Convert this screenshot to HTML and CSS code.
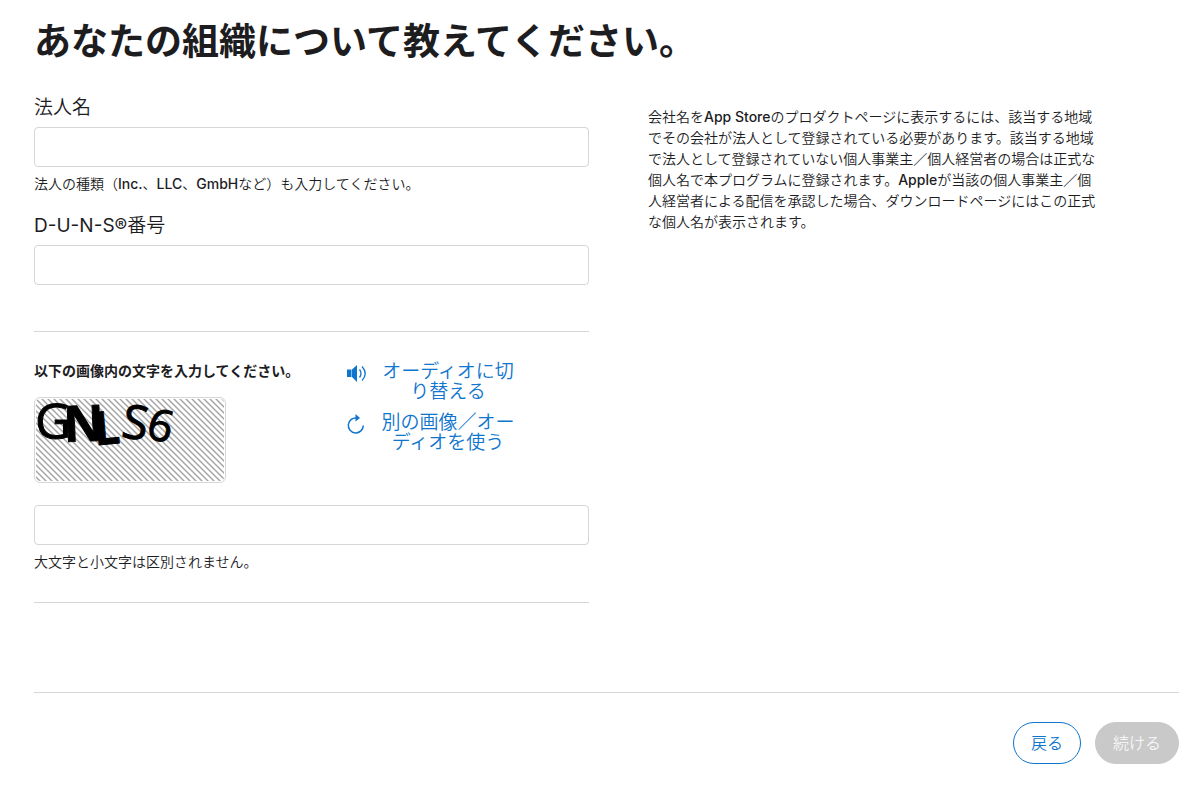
FILE: index.html
```html
<!DOCTYPE html>
<html lang="ja">
<head>
<meta charset="utf-8">
<meta name="viewport" content="width=device-width, initial-scale=1">
<title>あなたの組織について教えてください。</title>
<link rel="stylesheet" href="styles.css">
</head>
<body>
<main class="page">
  <h1 class="title">あなたの組織について教えてください。</h1>
  <form class="form">
    <div class="columns">
      <div class="fields">
        <div class="field">
          <label class="label" for="entity">法人名</label>
          <input class="input" id="entity" type="text" aria-describedby="entity-hint">
          <p class="hint" id="entity-hint">法人の種類（<span class="latin">Inc.</span>、<span class="latin">LLC</span>、<span class="latin">GmbH</span>など）も入力してください。</p>
        </div>
        <div class="field">
          <label class="label" for="duns"><span class="duns">D-U-N-S®</span>番号</label>
          <input class="input" id="duns" type="text">
        </div>
        <section class="captcha">
          <div class="challenge">
            <div class="prompt">
              <label class="prompt-label" for="answer">以下の画像内の文字を入力してください。</label>
              <svg class="picture" viewBox="0 0 188 82" role="img" aria-label="画像認証">
                <defs>
                  <pattern id="hatch" width="6" height="6" patternUnits="userSpaceOnUse">
                    <path d="M-1 -1L7 7M-1 5L1 7M5 -1L7 1" stroke="#a6a6a6" stroke-width="1.5"/>
                  </pattern>
                </defs>
                <rect width="188" height="82" fill="url(#hatch)"/>
                <g class="glyphs">
                  <text x="-1" y="40" font-size="50">G</text>
                  <text class="bold" x="28" y="43" font-size="50" transform="rotate(-2 30 43)">N</text>
                  <text class="heavy" x="59" y="46" font-size="46" transform="rotate(-5 62 46)">L</text>
                  <text x="84" y="38" font-size="47" transform="rotate(9 86 39)">S</text>
                  <text x="108" y="39" font-size="44" transform="rotate(14 110 42)">6</text>
                </g>
              </svg>
            </div>
            <div class="actions">
              <button class="action" type="button">
                <svg class="icon" viewBox="0 0 22 22" aria-hidden="true"><path d="M1 7.500h4.500V15H1zM6 7.500L11 3V20L6 15z" fill="currentColor"/><path d="M13.500 7.500q3 4 0 8M16 4.500q6.500 7 0 14" fill="none" stroke="currentColor" stroke-width="1.300"/></svg>
                <span class="action-text">オーディオに切り替える</span>
              </button>
              <button class="action" type="button">
                <svg class="icon" viewBox="0 0 22 22" aria-hidden="true"><path d="M11 5A7.500 7.500 0 1 0 17.300 12.500" fill="none" stroke="currentColor" stroke-width="1.500"/><path d="M9.500 1L14 5L9.500 8.500z" fill="currentColor"/></svg>
                <span class="action-text">別の画像／オーディオを使う</span>
              </button>
            </div>
          </div>
          <input class="input" id="answer" type="text" aria-describedby="answer-hint">
          <p class="hint" id="answer-hint">大文字と小文字は区別されません。</p>
        </section>
      </div>
      <p class="note">会社名を<span class="latin">App Store</span>のプロダクトページに表示するには、該当する地域<br>でその会社が法人として登録されている必要があります。該当する地域<br>で法人として登録されていない個人事業主／個人経営者の場合は正式な<br>個人名で本プログラムに登録されます。<span class="latin">Apple</span>が当該の個人事業主／個<br>人経営者による配信を承認した場合、ダウンロードページにはこの正式<br>な個人名が表示されます。</p>
    </div>
    <div class="footer">
      <button class="button back" type="button">戻る</button>
      <button class="button next" type="submit" disabled>続ける</button>
    </div>
  </form>
</main>
</body>
</html>
```
FILE: styles.css
```css
* {
  box-sizing: border-box;
}

body {
  margin: 0;
  background: #fff;
  color: #1d1d1f;
  font: 350 14px/21px Inter, "Noto Sans CJK JP", sans-serif;
}

button,
input {
  font: inherit;
}

.page {
  padding: 16px 21px 20px 34px;
}

.title {
  margin: 0;
  font-size: 37px;
  line-height: 52px;
  font-weight: 700;
}

.columns {
  display: grid;
  grid-template-columns: minmax(0, 555fr) minmax(0, 531fr);
  column-gap: 59px;
  margin-top: 27px;
}

.field {
  margin-bottom: 19px;
}

.label {
  display: block;
  margin-bottom: 6px;
  font-size: 19px;
  line-height: 26px;
}

.duns {
  font-weight: 400;
}

.input {
  display: block;
  width: 100%;
  height: 40px;
  padding: 0 12px;
  border: 1px solid #d6d6d6;
  border-radius: 4px;
  background: #fff;
}

.hint {
  margin: 6px 0 0;
}

.latin {
  font-weight: 500;
}

.captcha {
  margin-top: 46px;
  padding: 28px 0 30px;
  border: solid #d6d6d6;
  border-width: 1px 0;
}

.challenge {
  display: flex;
  margin-bottom: 22px;
}

.prompt {
  width: 312px;
}

.prompt-label {
  display: block;
  margin-bottom: 16px;
  font-weight: 700;
}

.picture {
  display: block;
  width: 192px;
  height: 86px;
  padding: 1px;
  border: 1px solid #d6d6d6;
  border-radius: 6px;
}

.glyphs {
  fill: #000;
  stroke: #000;
  stroke-width: 1;
  font-family: "Open Sans", sans-serif;
  font-weight: 400;
}

.bold {
  font-weight: 700;
}

.heavy {
  font-weight: 700;
}

.actions {
  display: flex;
  flex-direction: column;
  gap: 11px;
  padding-top: 2px;
}

.action {
  display: flex;
  gap: 10px;
  padding: 0;
  border: 0;
  background: none;
  color: #0f75cd;
  font-size: 19px;
  line-height: 20px;
}

.icon {
  width: 22px;
  height: 22px;
}

.action-text {
  width: 140px;
}

.note {
  margin: 11px 0 0;
}

.footer {
  display: flex;
  justify-content: flex-end;
  gap: 14px;
  margin-top: 89px;
  padding-top: 29px;
  border-top: 1px solid #d6d6d6;
}

.button {
  height: 42px;
  padding: 0 17px;
  border: 1px solid #0f75cd;
  border-radius: 21px;
  background: #fff;
  color: #0f75cd;
  font-size: 16px;
}

.next {
  border-color: #c9c9c9;
  background: #c9c9c9;
  color: #f5f5f5;
}
```
